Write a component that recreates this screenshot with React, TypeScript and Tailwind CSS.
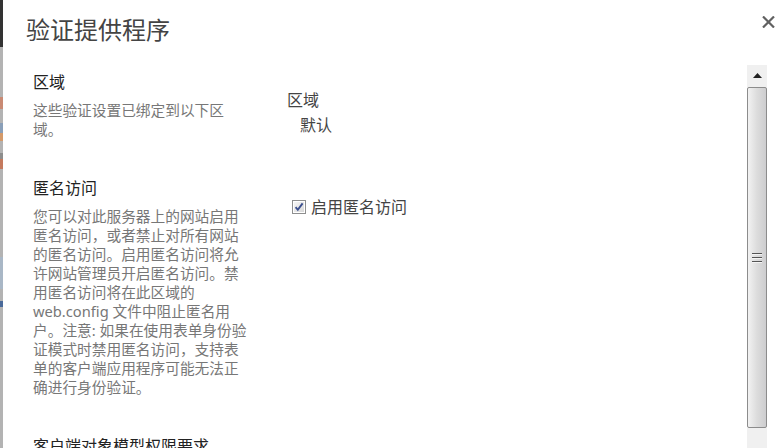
const font = "font-['Noto_Sans','Noto_Sans_CJK_SC',sans-serif]"

const anonLines = [
  '您可以对此服务器上的网站启用',
  '匿名访问，或者禁止对所有网站',
  '的匿名访问。启用匿名访问将允',
  '许网站管理员开启匿名访问。禁',
  '用匿名访问将在此区域的',
  'web.config 文件中阻止匿名用',
  '户。注意: 如果在使用表单身份验',
  '证模式时禁用匿名访问，支持表',
  '单的客户端应用程序可能无法正',
  '确进行身份验证。',
]

function Section({ title, lines, children }: { title: string; lines?: string[]; children?: React.ReactNode }) {
  return (
    <div className="flex pb-[39px]">
      <div className="w-[254px] shrink-0">
        <div className="text-[16px] leading-[20px] text-[#222]">{title}</div>
        {lines && (
          <div className="mt-[9px] whitespace-nowrap text-[14.7px] leading-[19px] text-[#777]">
            {lines.map((l) => (
              <div key={l}>{l}</div>
            ))}
          </div>
        )}
      </div>
      <div className="flex-1 pt-[18px] text-[16px] leading-[20px] text-[#444]">{children}</div>
    </div>
  )
}

function Checkbox() {
  return (
    <svg width="14" height="14" viewBox="0 0 14 14">
      <defs>
        <linearGradient id="cbg" x1="0" y1="0" x2="1" y2="1">
          <stop offset="0" stopColor="#f6f6f6" />
          <stop offset="1" stopColor="#d8d8d8" />
        </linearGradient>
      </defs>
      <rect x="0.5" y="0.5" width="13" height="13" fill="#fff" stroke="#8e8f8f" />
      <rect x="2" y="2" width="10" height="10" fill="url(#cbg)" />
      <path d="M3.6 7.2 L5.8 9.8 L10.6 3.4" fill="none" stroke="#3b4f8e" strokeWidth="1.9" />
    </svg>
  )
}

function Scrollbar() {
  return (
    <div className="flex w-[20px] shrink-0 flex-col bg-[#f0f0f0]">
      <div className="flex h-[22px] items-center justify-center pb-[1px]">
        <svg width="9" height="5" viewBox="0 0 9 5">
          <path d="M4.5 0 L9 5 L0 5 Z" fill="#222" />
        </svg>
      </div>
      <div className="flex h-[341px] items-center justify-center rounded-[2px] border border-[#8c8c8c] bg-gradient-to-r from-[#f2f2f2] via-[#dcdcdc] to-[#cdcdcf]">
        <div className="flex w-[10px] flex-col gap-[2px]">
          <div className="h-[2px] border-t border-[#555] border-b border-b-[#f4f4f4]" />
          <div className="h-[2px] border-t border-[#555] border-b border-b-[#f4f4f4]" />
          <div className="h-[2px] border-t border-[#555] border-b border-b-[#f4f4f4]" />
        </div>
      </div>
      <div className="flex-1" />
    </div>
  )
}

export default function App() {
  return (
    <div className={`flex h-[448px] w-[784px] overflow-hidden bg-white ${font}`}>
      <div className="flex w-[3px] shrink-0 flex-col bg-[#b3b3b3]">
        <div className="h-[47px] bg-[#333]" />
        <div className="h-[50px]" />
        <div className="h-[12px] bg-[#c98a74]" />
        <div className="h-[14px]" />
        <div className="h-[10px] bg-[#8a9fb8]" />
        <div className="h-[8px] bg-[#d49a6a]" />
        <div className="h-[12px]" />
        <div className="h-[6px] bg-[#8d8d8d]" />
        <div className="h-[10px] bg-[#c47a5e]" />
        <div className="h-[88px]" />
        <div className="h-[32px] bg-[#a9b7c6]" />
        <div className="h-[12px]" />
        <div className="h-[6px] bg-[#4a6a9a]" />
      </div>
      <div className="flex flex-1 flex-col">
        <div className="flex h-[65px] shrink-0 items-start justify-between">
          <div className="pl-[23px] pt-[14px] text-[24px] leading-[32px] text-[#444]">验证提供程序</div>
          <div className="pr-[9px] pt-[16px]">
            <svg width="13" height="12" viewBox="0 0 13 12">
              <path d="M1 0.5 L12 11.5 M12 0.5 L1 11.5" stroke="#616161" strokeWidth="2.2" />
            </svg>
          </div>
        </div>
        <div className="flex h-[383px] overflow-hidden">
          <div className="flex-1 overflow-hidden pl-[30px] pt-[7px]">
            <Section title="区域" lines={['这些验证设置已绑定到以下区', '域。']}>
              <div>区域</div>
              <div className="mt-[5px] pl-[13px]">默认</div>
            </Section>
            <Section title="匿名访问" lines={anonLines}>
              <div className="flex items-center pl-[5px] pt-[1px]">
                <Checkbox />
                <span className="ml-[5px]">启用匿名访问</span>
              </div>
            </Section>
            <Section title="客户端对象模型权限要求" />
          </div>
          <Scrollbar />
          <div className="w-[17px] shrink-0" />
        </div>
      </div>
    </div>
  )
}
